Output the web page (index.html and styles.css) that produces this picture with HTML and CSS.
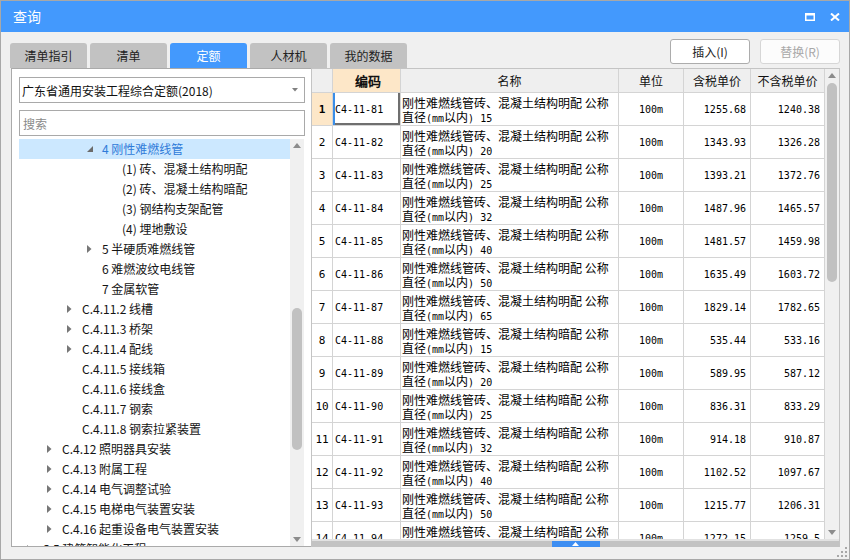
FILE: index.html
```html
<!DOCTYPE html>
<html lang="zh-CN">
<head>
<meta charset="utf-8">
<title>查询</title>
<link rel="stylesheet" href="styles.css">
</head>
<body>
<div class="window">
  <div class="titlebar">
    <span class="title">查询</span>
    <div class="ctrls">
      <svg class="ico" width="10" height="8" viewBox="0 0 10 8"><rect x="0.75" y="0.75" width="8.5" height="6.5" fill="none" stroke="#fff" stroke-width="1.5"/><rect x="0" y="0" width="10" height="2.5" fill="#fff"/></svg>
      <svg class="ico" width="10" height="8" viewBox="0 0 10 8"><path d="M1 0.5 L9 7.5 M9 0.5 L1 7.5" stroke="#fff" stroke-width="2" fill="none"/></svg>
    </div>
  </div>
  <div class="content">
    <div class="toolbar">
      <div class="tabs">
        <div class="tab">清单指引</div>
        <div class="tab">清单</div>
        <div class="tab active">定额</div>
        <div class="tab">人材机</div>
        <div class="tab">我的数据</div>
      </div>
      <div class="buttons">
        <button class="btn">插入(I)</button>
        <button class="btn" disabled>替换(R)</button>
      </div>
    </div>
    <div class="main">
      <div class="left">
        <div class="select"><span>广东省通用安装工程综合定额(2018)</span><svg width="6" height="4" viewBox="0 0 6 4"><path d="M0 0 L6 0 L3 3.5 Z" fill="#808080"/></svg></div>
        <div class="search">搜索</div>
        <div class="tree">
          <div class="rows">
            <div class="node l3 sel"><span class="arr"><svg width="6" height="6" viewBox="0 0 6 6"><path d="M6 0 L6 6 L0 6 Z" fill="#6b6b6b"/></svg></span>4 刚性难燃线管</div>
            <div class="node l4"><span class="arr"></span>(1) 砖、混凝土结构明配</div>
            <div class="node l4"><span class="arr"></span>(2) 砖、混凝土结构暗配</div>
            <div class="node l4"><span class="arr"></span>(3) 钢结构支架配管</div>
            <div class="node l4"><span class="arr"></span>(4) 埋地敷设</div>
            <div class="node l3"><span class="arr"><svg width="5" height="8" viewBox="0 0 5 8"><path d="M0 0 L4.5 4 L0 8 Z" fill="#777"/></svg></span>5 半硬质难燃线管</div>
            <div class="node l3"><span class="arr"></span>6 难燃波纹电线管</div>
            <div class="node l3"><span class="arr"></span>7 金属软管</div>
            <div class="node l2"><span class="arr"><svg width="5" height="8" viewBox="0 0 5 8"><path d="M0 0 L4.5 4 L0 8 Z" fill="#777"/></svg></span>C.4.11.2 线槽</div>
            <div class="node l2"><span class="arr"><svg width="5" height="8" viewBox="0 0 5 8"><path d="M0 0 L4.5 4 L0 8 Z" fill="#777"/></svg></span>C.4.11.3 桥架</div>
            <div class="node l2"><span class="arr"><svg width="5" height="8" viewBox="0 0 5 8"><path d="M0 0 L4.5 4 L0 8 Z" fill="#777"/></svg></span>C.4.11.4 配线</div>
            <div class="node l2"><span class="arr"></span>C.4.11.5 接线箱</div>
            <div class="node l2"><span class="arr"></span>C.4.11.6 接线盒</div>
            <div class="node l2"><span class="arr"></span>C.4.11.7 钢索</div>
            <div class="node l2"><span class="arr"></span>C.4.11.8 钢索拉紧装置</div>
            <div class="node l1"><span class="arr"><svg width="5" height="8" viewBox="0 0 5 8"><path d="M0 0 L4.5 4 L0 8 Z" fill="#777"/></svg></span>C.4.12 照明器具安装</div>
            <div class="node l1"><span class="arr"><svg width="5" height="8" viewBox="0 0 5 8"><path d="M0 0 L4.5 4 L0 8 Z" fill="#777"/></svg></span>C.4.13 附属工程</div>
            <div class="node l1"><span class="arr"><svg width="5" height="8" viewBox="0 0 5 8"><path d="M0 0 L4.5 4 L0 8 Z" fill="#777"/></svg></span>C.4.14 电气调整试验</div>
            <div class="node l1"><span class="arr"><svg width="5" height="8" viewBox="0 0 5 8"><path d="M0 0 L4.5 4 L0 8 Z" fill="#777"/></svg></span>C.4.15 电梯电气装置安装</div>
            <div class="node l1"><span class="arr"><svg width="5" height="8" viewBox="0 0 5 8"><path d="M0 0 L4.5 4 L0 8 Z" fill="#777"/></svg></span>C.4.16 起重设备电气装置安装</div>
            <div class="node l0"><span class="arr"><svg width="5" height="8" viewBox="0 0 5 8"><path d="M0 0 L4.5 4 L0 8 Z" fill="#777"/></svg></span>C.5 建筑智能化工程</div>
          </div>
          <div class="vscroll tscroll">
            <div class="up"><svg width="8" height="5" viewBox="0 0 8 5"><path d="M0 5 L4 0 L8 5 Z" fill="#8c8c8c"/></svg></div>
            <div class="track"><div class="thumb"></div></div>
            <div class="down"><svg width="8" height="5" viewBox="0 0 8 5"><path d="M0 0 L8 0 L4 5 Z" fill="#8c8c8c"/></svg></div>
          </div>
        </div>
      </div>
      <div class="right">
        <div class="tablearea">
          <div class="grid">
            <div class="row head">
              <div class="c rn"></div>
              <div class="c code hl">编码</div>
              <div class="c hname">名称</div>
              <div class="c unit">单位</div>
              <div class="c num">含税单价</div>
              <div class="c num">不含税单价</div>
            </div>
            <div class="row">
              <div class="c rn cur">1</div>
              <div class="c code focus">C4-11-81</div>
              <div class="c name">刚性难燃线管砖、混凝土结构明配 公称<br>直径<span class="m">(mm</span>以内<span class="m">) 15</span></div>
              <div class="c unit">100m</div>
              <div class="c num">1255.68</div>
              <div class="c num">1240.38</div>
            </div>
            <div class="row">
              <div class="c rn">2</div>
              <div class="c code">C4-11-82</div>
              <div class="c name">刚性难燃线管砖、混凝土结构明配 公称<br>直径<span class="m">(mm</span>以内<span class="m">) 20</span></div>
              <div class="c unit">100m</div>
              <div class="c num">1343.93</div>
              <div class="c num">1326.28</div>
            </div>
            <div class="row">
              <div class="c rn">3</div>
              <div class="c code">C4-11-83</div>
              <div class="c name">刚性难燃线管砖、混凝土结构明配 公称<br>直径<span class="m">(mm</span>以内<span class="m">) 25</span></div>
              <div class="c unit">100m</div>
              <div class="c num">1393.21</div>
              <div class="c num">1372.76</div>
            </div>
            <div class="row">
              <div class="c rn">4</div>
              <div class="c code">C4-11-84</div>
              <div class="c name">刚性难燃线管砖、混凝土结构明配 公称<br>直径<span class="m">(mm</span>以内<span class="m">) 32</span></div>
              <div class="c unit">100m</div>
              <div class="c num">1487.96</div>
              <div class="c num">1465.57</div>
            </div>
            <div class="row">
              <div class="c rn">5</div>
              <div class="c code">C4-11-85</div>
              <div class="c name">刚性难燃线管砖、混凝土结构明配 公称<br>直径<span class="m">(mm</span>以内<span class="m">) 40</span></div>
              <div class="c unit">100m</div>
              <div class="c num">1481.57</div>
              <div class="c num">1459.98</div>
            </div>
            <div class="row">
              <div class="c rn">6</div>
              <div class="c code">C4-11-86</div>
              <div class="c name">刚性难燃线管砖、混凝土结构明配 公称<br>直径<span class="m">(mm</span>以内<span class="m">) 50</span></div>
              <div class="c unit">100m</div>
              <div class="c num">1635.49</div>
              <div class="c num">1603.72</div>
            </div>
            <div class="row">
              <div class="c rn">7</div>
              <div class="c code">C4-11-87</div>
              <div class="c name">刚性难燃线管砖、混凝土结构明配 公称<br>直径<span class="m">(mm</span>以内<span class="m">) 65</span></div>
              <div class="c unit">100m</div>
              <div class="c num">1829.14</div>
              <div class="c num">1782.65</div>
            </div>
            <div class="row">
              <div class="c rn">8</div>
              <div class="c code">C4-11-88</div>
              <div class="c name">刚性难燃线管砖、混凝土结构暗配 公称<br>直径<span class="m">(mm</span>以内<span class="m">) 15</span></div>
              <div class="c unit">100m</div>
              <div class="c num">535.44</div>
              <div class="c num">533.16</div>
            </div>
            <div class="row">
              <div class="c rn">9</div>
              <div class="c code">C4-11-89</div>
              <div class="c name">刚性难燃线管砖、混凝土结构暗配 公称<br>直径<span class="m">(mm</span>以内<span class="m">) 20</span></div>
              <div class="c unit">100m</div>
              <div class="c num">589.95</div>
              <div class="c num">587.12</div>
            </div>
            <div class="row">
              <div class="c rn">10</div>
              <div class="c code">C4-11-90</div>
              <div class="c name">刚性难燃线管砖、混凝土结构暗配 公称<br>直径<span class="m">(mm</span>以内<span class="m">) 25</span></div>
              <div class="c unit">100m</div>
              <div class="c num">836.31</div>
              <div class="c num">833.29</div>
            </div>
            <div class="row">
              <div class="c rn">11</div>
              <div class="c code">C4-11-91</div>
              <div class="c name">刚性难燃线管砖、混凝土结构暗配 公称<br>直径<span class="m">(mm</span>以内<span class="m">) 32</span></div>
              <div class="c unit">100m</div>
              <div class="c num">914.18</div>
              <div class="c num">910.87</div>
            </div>
            <div class="row">
              <div class="c rn">12</div>
              <div class="c code">C4-11-92</div>
              <div class="c name">刚性难燃线管砖、混凝土结构暗配 公称<br>直径<span class="m">(mm</span>以内<span class="m">) 40</span></div>
              <div class="c unit">100m</div>
              <div class="c num">1102.52</div>
              <div class="c num">1097.67</div>
            </div>
            <div class="row">
              <div class="c rn">13</div>
              <div class="c code">C4-11-93</div>
              <div class="c name">刚性难燃线管砖、混凝土结构暗配 公称<br>直径<span class="m">(mm</span>以内<span class="m">) 50</span></div>
              <div class="c unit">100m</div>
              <div class="c num">1215.77</div>
              <div class="c num">1206.31</div>
            </div>
            <div class="row">
              <div class="c rn">14</div>
              <div class="c code">C4-11-94</div>
              <div class="c name">刚性难燃线管砖、混凝土结构暗配 公称<br>直径<span class="m">(mm</span>以内<span class="m">) 65</span></div>
              <div class="c unit">100m</div>
              <div class="c num">1272.15</div>
              <div class="c num">1259.5</div>
            </div>
          </div>
          <div class="vscroll gscroll">
            <div class="up"><svg width="8" height="5" viewBox="0 0 8 5"><path d="M0 5 L4 0 L8 5 Z" fill="#8c8c8c"/></svg></div>
            <div class="track"><div class="thumb"></div></div>
            <div class="down"><svg width="8" height="5" viewBox="0 0 8 5"><path d="M0 0 L8 0 L4 5 Z" fill="#8c8c8c"/></svg></div>
          </div>
        </div>
        <div class="hbar"><div class="handle"><svg width="7" height="4" viewBox="0 0 7 4"><path d="M0 4 L3.5 0 L7 4 Z" fill="#fff"/></svg></div></div>
      </div>
    </div>
  </div>
  <svg class="grip" width="10" height="10" viewBox="0 0 10 10">
    <rect x="8" y="0" width="2" height="2" fill="#a8a8a8"/>
    <rect x="4" y="4" width="2" height="2" fill="#a8a8a8"/>
    <rect x="8" y="4" width="2" height="2" fill="#a8a8a8"/>
    <rect x="0" y="8" width="2" height="2" fill="#a8a8a8"/>
    <rect x="4" y="8" width="2" height="2" fill="#a8a8a8"/>
    <rect x="8" y="8" width="2" height="2" fill="#a8a8a8"/>
  </svg>
</div>
</body>
</html>
```

FILE: styles.css
```css
* { box-sizing: border-box; }
html, body { margin: 0; padding: 0; }
body {
  width: 850px;
  height: 560px;
  overflow: hidden;
  font-family: "Noto Sans CJK SC", "Microsoft YaHei", sans-serif;
  font-size: 12px;
  color: #1a1a1a;
  background: #f0f0f0;
}
.window {
  width: 850px;
  height: 560px;
  border: 1px solid #a8a8a8;
  background: #f0f0f0;
  display: flex;
  flex-direction: column;
  position: relative;
}
.titlebar {
  height: 31px;
  flex: none;
  background: #4399fd;
  color: #fff;
  display: flex;
  align-items: center;
  padding: 0 9px 0 12px;
  font-size: 14px;
}
.title { flex: 1; line-height: 31px; }
.ctrls { display: flex; gap: 15px; align-items: center; }
.ico { display: block; }

.content {
  flex: 1;
  display: flex;
  flex-direction: column;
  padding: 0 9px;
}
.toolbar {
  height: 36px;
  flex: none;
  display: flex;
  justify-content: space-between;
}
.tabs {
  display: flex;
  gap: 3px;
  align-self: flex-end;
}
.tab {
  width: 77px;
  height: 25px;
  background: #c2c2c2;
  border-radius: 3px 3px 0 0;
  display: flex;
  align-items: center;
  justify-content: center;
  color: #222;
  font-size: 12px;
}
.tab.active { background: #4399fd; color: #fff; }
.buttons { display: flex; gap: 10px; padding-top: 7px; }
.btn {
  width: 80px;
  height: 25px;
  background: #fff;
  border: 1px solid #acacac;
  border-radius: 3px;
  font-family: "Noto Sans CJK SC", sans-serif;
  font-size: 12px;
  color: #1e1e1e;
  padding: 0;
}
.btn:disabled { border-color: #d6d6d6; color: #a8a8a8; background: #fcfcfc; }

.main {
  height: 479px;
  flex: none;
  display: flex;
}
.left {
  width: 300px;
  margin-left: 1px;
  background: #fff;
  border: 1px solid #aaaaaa;
  border-right: none;
  display: flex;
  flex-direction: column;
  padding: 8px 6px 0 7px;
}
.select {
  height: 26px;
  flex: none;
  border: 1px solid #a9a9a9;
  display: flex;
  align-items: center;
  justify-content: space-between;
  padding: 0 6px 0 2px;
  color: #111;
}
.search {
  height: 26px;
  flex: none;
  margin-top: 7px;
  border: 1px solid #a9a9a9;
  display: flex;
  align-items: center;
  padding-left: 3px;
  color: #8a8a8a;
}
.tree {
  flex: 1;
  margin-top: 3px;
  display: flex;
  overflow: hidden;
  min-height: 0;
}
.rows { width: 271px; flex: none; }
.node {
  height: 20px;
  line-height: 20px;
  display: flex;
  align-items: center;
  white-space: nowrap;
  color: #141414;
}
.node.sel { background: #cce8ff; color: #2f7bd9; }
.arr { width: 15px; flex: none; display: flex; align-items: center; }
.arr svg { display: block; }
.l0 { padding-left: 8px; }
.l1 { padding-left: 28px; }
.l2 { padding-left: 48px; }
.l3 { padding-left: 68px; }
.l4 { padding-left: 88px; }

.vscroll {
  width: 14px;
  flex: none;
  background: #f0f0f0;
  display: flex;
  flex-direction: column;
}
.vscroll .up, .vscroll .down {
  height: 13px;
  flex: none;
  display: flex;
  align-items: center;
  justify-content: center;
}
.vscroll .track { flex: 1; padding: 0 2px; }
.thumb { background: #c1c1c1; border-radius: 5px; width: 10px; }
.tscroll .thumb { margin-top: 156px; height: 142px; }
.gscroll .thumb { margin-top: 1px; height: 199px; }

.right {
  width: 529px;
  border: 1px solid #c4c4c4;
  border-bottom: none;
  background: #fff;
  display: flex;
  flex-direction: column;
}
.tablearea {
  flex: 1;
  display: flex;
  overflow: hidden;
  min-height: 0;
}
.grid { width: 513px; flex: none; }
.row {
  display: grid;
  grid-template-columns: 21px 68px 218px 65px 67px 74px;
  height: 33px;
}
.row.head { height: 24px; }
.c {
  border-right: 1px solid #d4d4d4;
  border-bottom: 1px solid #d4d4d4;
  display: flex;
  align-items: center;
  overflow: hidden;
  white-space: nowrap;
  color: #000;
}
.head .c {
  background: #efefef;
  justify-content: center;
  font-size: 12px;
  color: #111;
}
.head .c.hl { background: #fde7c8; font-weight: bold; font-size: 13px; }
.rn {
  justify-content: center;
  font-family: "DejaVu Sans Mono", monospace;
  font-size: 11px;
}
.rn.cur { background: #fde7c8; font-weight: bold; }
.code {
  padding-left: 2px;
  font-family: "DejaVu Sans Mono", monospace;
  font-size: 10px;
}
.code.focus {
  box-shadow: inset 2px 0 0 #3a8ee8, inset -2px -2px 0 #6f6f6f;
}
.name {
  display: block;
  padding: 3px 0 0 1px;
  line-height: 13.5px;
  font-size: 12px;
}
.m { font-family: "DejaVu Sans Mono", monospace; font-size: 10px; }
.unit {
  justify-content: center;
  font-family: "DejaVu Sans Mono", monospace;
  font-size: 10px;
}
.num {
  justify-content: flex-end;
  padding-right: 4px;
  font-family: "DejaVu Sans Mono", monospace;
  font-size: 10px;
}
.head .unit, .head .num { padding-right: 0; font-family: "Noto Sans CJK SC", sans-serif; font-size: 12px; }

.hbar {
  height: 8px;
  flex: none;
  border-top: 2px solid #e2e2e2;
  background: #c3c3c3;
  display: flex;
  justify-content: center;
}
.handle {
  width: 48px;
  background: #3d8ef2;
  display: flex;
  align-items: center;
  justify-content: center;
}
.handle svg { display: block; }

.grip { position: absolute; right: 2px; bottom: 2px; }
```
